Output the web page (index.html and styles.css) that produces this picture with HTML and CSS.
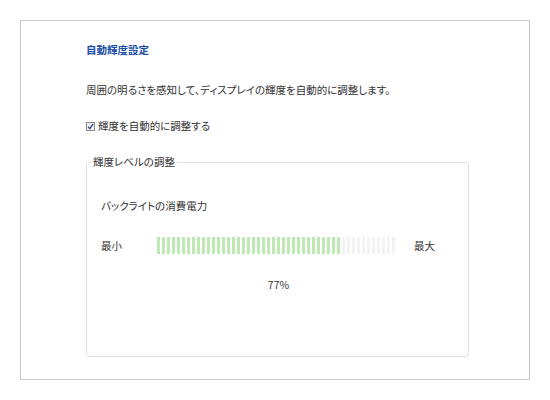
FILE: index.html
```html
<!DOCTYPE html>
<html lang="ja">
<head>
<meta charset="utf-8">
<title>自動輝度設定</title>
<link rel="stylesheet" href="styles.css">
</head>
<body>
<div class="frame">
  <h1 class="title">自動輝度設定</h1>
  <p class="desc">周囲の明るさを感知して、ディスプレイの輝度を自動的に調整します。</p>
  <label class="check-row">
    <span class="checkbox"><svg viewBox="0 0 9 9" width="9" height="9"><path d="M2 4.6 L3.8 6.6 L7.2 1.8" fill="none" stroke="#2b4f8c" stroke-width="1.3"/></svg></span>
    <span>輝度を自動的に調整する</span>
  </label>
  <fieldset class="group">
    <legend class="legend">輝度レベルの調整</legend>
    <div class="sub">バックライトの消費電力</div>
    <div class="meter-row">
      <span class="min">最小</span>
      <div class="meter" id="meter"></div>
      <span class="max">最大</span>
    </div>
    <div class="percent">77%</div>
  </fieldset>
</div>
<script>
  var m = document.getElementById('meter');
  var total = 48, on = Math.round(total * 0.77);
  for (var i = 0; i < total; i++) {
    var s = document.createElement('span');
    s.className = 'seg' + (i < on ? ' on' : '');
    m.appendChild(s);
  }
</script>
</body>
</html>
```
FILE: styles.css
```css
html, body {
  margin: 0;
  padding: 0;
  background: #ffffff;
}
body {
  font-family: "Noto Sans CJK JP", "Noto Sans", sans-serif;
  font-feature-settings: "palt";
  font-size: 10.5px;
  line-height: 14px;
  color: #333333;
}
.frame {
  box-sizing: border-box;
  margin: 20px 0 0 20px;
  width: 510px;
  height: 360px;
  border: 1px solid #c9c9c9;
  padding: 22px 0 0 65px;
  display: flex;
  flex-direction: column;
  align-items: flex-start;
}
.title {
  margin: 0;
  font-size: 10.5px;
  line-height: 14px;
  font-weight: bold;
  color: #1d4ea6;
}
.desc {
  margin: 26px 0 0 0;
}
.check-row {
  margin-top: 22px;
  display: flex;
  align-items: center;
  gap: 3px;
}
.checkbox {
  box-sizing: border-box;
  width: 9px;
  height: 9px;
  border: 1px solid #8e8e8e;
  background: #f0f0f0;
  display: flex;
}
.checkbox svg {
  margin: -1px;
}
.group {
  box-sizing: border-box;
  margin: 22px 0 0 0;
  padding: 0;
  width: 383px;
  height: 202px;
  border: 1px solid #dce3ea;
  border-radius: 3px;
  min-inline-size: 0;
}
.legend {
  margin-left: 4px;
  padding: 0 2px;
}
.sub {
  margin: 30px 0 0 14px;
}
.meter-row {
  margin: 24px 0 0 14px;
  display: flex;
  align-items: center;
  height: 17px;
}
.min {
  width: 56px;
}
.meter {
  width: 238px;
  height: 17px;
  display: flex;
  gap: 2px;
}
.seg {
  width: 3px;
  height: 17px;
  background: #f3f3f3;
}
.seg.on {
  background: #bfe9b2;
}
.max {
  margin-left: 19px;
}
.percent {
  margin-top: 24px;
  text-align: center;
  padding-left: 2px;
}
```
